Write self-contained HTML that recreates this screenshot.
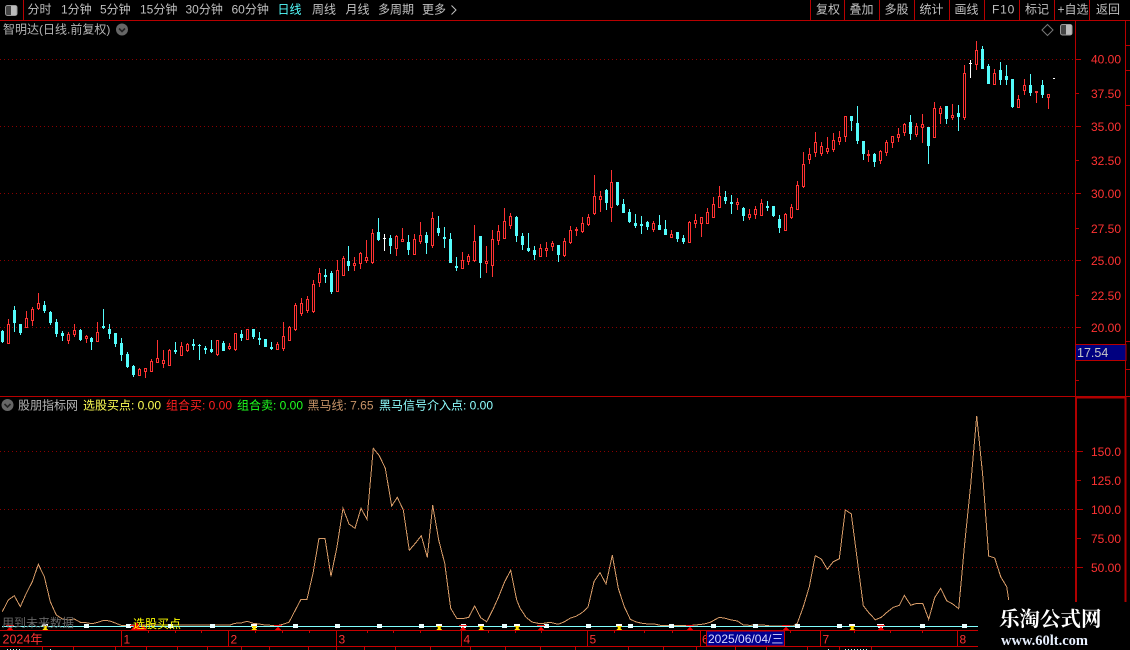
<!DOCTYPE html>
<html lang="zh"><head><meta charset="utf-8"><title>K线</title>
<style>
html,body{margin:0;padding:0;background:#000;width:1130px;height:650px;overflow:hidden}
svg{display:block;position:absolute;left:0;top:0}
text{font-family:"Liberation Sans","WenQuanYi Zen Hei","Noto Sans CJK SC",sans-serif;font-size:12px;white-space:pre}
.m{fill:#c0c0c0}
.l{fill:#ff3232;font-size:12.5px}
</style></head><body>
<svg id="s" width="1130" height="650" viewBox="0 0 1130 650" xmlns="http://www.w3.org/2000/svg" shape-rendering="crispEdges">
<defs><pattern id="dot" x="0" y="0" width="4" height="1" patternUnits="userSpaceOnUse"><rect width="1" height="1" fill="#8a0000"/></pattern></defs>
<rect width="1130" height="650" fill="#000"/>
<g fill="url(#dot)">
<rect x="0" y="59" width="1075" height="1"/><rect x="0" y="126" width="1075" height="1"/><rect x="0" y="193" width="1075" height="1"/><rect x="0" y="260" width="1075" height="1"/><rect x="0" y="327" width="1075" height="1"/><rect x="0" y="451" width="1075" height="1"/><rect x="0" y="509" width="1075" height="1"/><rect x="0" y="567" width="1075" height="1"/>
</g>
<g id="c"></g>
<g fill="none" stroke="#b80000" stroke-width="1">
<path d="M0 20.5H1130M0 396.5H1130M23.5 0V20M810.5 0V20M844.5 0V20M879.5 0V20M914.5 0V20M949.5 0V20M984.5 0V20M1019.5 0V20M1054.5 0V20M1089.5 0V20"/>
<path d="M1075.5 20V396M1125.5 20V396"/>
<path d="M1075 59.5H1081M1075 93.5H1079M1075 126.5H1081M1075 160.5H1079M1075 193.5H1081M1075 228.5H1079M1075 260.5H1081M1075 295.5H1079M1075 327.5H1081M1075 380.5H1079"/>
<path d="M1126 45.5H1130M1126 70.5H1130M1126 105.5H1130M1126 341.5H1130M1126 369.5H1130"/>
</g>
<g fill="none" stroke="#b00000">
<path d="M1076 397V602M1125.5 397V602M1075 397.5H1126" stroke-width="2"/>
<path d="M1077 451.5H1083M1077 480.5H1081M1077 509.5H1083M1077 538.5H1081M1077 567.5H1083"/>
</g>
<!-- menu -->
<g class="m">
<text x="27.5" y="13.5">分时</text><text x="61" y="13.5">1分钟</text><text x="100" y="13.5">5分钟</text><text x="140" y="13.5">15分钟</text><text x="185.5" y="13.5">30分钟</text><text x="231.5" y="13.5">60分钟</text>
<text x="277.5" y="13.5" style="fill:#54ffff">日线</text><text x="312" y="13.5">周线</text><text x="345.5" y="13.5">月线</text><text x="378" y="13.5">多周期</text><text x="422" y="13.5">更多</text>
<text x="816" y="13.5">复权</text><text x="849.5" y="13.5">叠加</text><text x="884.5" y="13.5">多股</text><text x="919.5" y="13.5">统计</text><text x="954.5" y="13.5">画线</text><text x="992" y="13.5" style="letter-spacing:.8px">F10</text><text x="1025" y="13.5">标记</text><text x="1057.5" y="13.5">+自选</text><text x="1096" y="13.5">返回</text>
<text x="3" y="33.5" style="fill:#b4b4b4">智明达(日线.前复权)</text>
</g>
<path d="M451.5 5.5L456 10L451.5 14.5" fill="none" stroke="#c0c0c0" shape-rendering="auto"/>
<!-- icons -->
<g shape-rendering="auto">
<rect x="5.5" y="5.5" width="11.5" height="10" rx="2" fill="#444" stroke="#999"/><rect x="11" y="6" width="5.5" height="9" fill="#bbb"/>
<rect x="1060.5" y="24.5" width="11.5" height="10.5" rx="2" fill="#444" stroke="#999"/><rect x="1066" y="25" width="5.5" height="9.5" fill="#bbb"/>
<path d="M1047.5 24.5L1053 30L1047.5 35.5L1042 30Z" fill="none" stroke="#777"/>
<circle cx="122" cy="29.5" r="6" fill="#666"/><path d="M119 28.5L122 31.5L125 28.5" fill="none" stroke="#222" stroke-width="1.6"/>
<circle cx="7.5" cy="405" r="6" fill="#666"/><path d="M4.5 404L7.5 407L10.5 404" fill="none" stroke="#222" stroke-width="1.6"/>
</g>
<!-- legend -->
<text x="18" y="409.5" fill="#b4b4b4">股朋指标网</text>
<text x="83" y="409.5" fill="#ffff54">选股买点: 0.00</text>
<text x="166" y="409.5" fill="#ff2020">组合买: 0.00</text>
<text x="237" y="409.5" fill="#20ff20">组合卖: 0.00</text>
<text x="307.5" y="409.5" fill="#c89468">黑马线: 7.65</text>
<text x="379" y="409.5" fill="#90ffff">黑马信号介入点: 0.00</text>
<!-- axis labels -->
<g class="l">
<text x="1091" y="63.5">40.00</text><text x="1091" y="98">37.50</text><text x="1091" y="131">35.00</text><text x="1091" y="165">32.50</text><text x="1091" y="198">30.00</text><text x="1091" y="233">27.50</text><text x="1091" y="265">25.00</text><text x="1091" y="300">22.50</text><text x="1091" y="332">20.00</text>
<text x="1091" y="456">150.0</text><text x="1091" y="485">125.0</text><text x="1091" y="514">100.0</text><text x="1091" y="543">75.00</text><text x="1091" y="572">50.00</text>
</g>
<rect x="1075.5" y="344.5" width="50.5" height="16" fill="#000080" stroke="#b80000"/>
<text x="1077" y="357" fill="#c8c8c8" style="font-size:12.5px">17.54</text>
<!-- line -->
<polyline id="pl" fill="none" stroke="#d89c68" stroke-width="1" points="2.3,611.7 8.3,600 14.3,595.7 20.3,606.7 26.3,593.3 32.3,581.7 38.3,564.3 44.3,576.7 50.3,601.7 56.3,615 62.3,619 68.3,620 74.3,619 80.3,622.3 86.3,622.7 92,623.7 98,622.3 104,620.3 110,621 116,623.3 122,625.7 128,625 134,625 230,625 235,623.3 241,623 247,621.3 253,623.3 259,624 265,625 271,625.3 277,625.7 283,624.3 289,622.3 295,610.7 301,599.3 307,599.3 313,573.3 319,538.3 325,538.3 331,576.3 337,546.7 343,508.3 349,524 355,528.3 361,508.3 367,519.3 373.3,448.3 379.3,455.7 385.3,468.3 391.7,506 397.3,497.3 403.3,510 409.3,550.3 415.3,543.3 421.3,535.7 427.3,557.3 432.7,505.3 438.7,540 444.7,563.3 450.7,608.3 456.7,618.3 462.7,618.7 468.7,617.3 474.7,606 480.7,617.7 486.7,621.7 492.7,610 498.7,596.7 504.7,581.7 510.7,570.3 516.7,600 520,608 526,617.3 532,622 538,623.3 544,623.3 550,622.3 558,624.3 564,622 570,618.3 576,616.3 582,612.7 588,607.3 594,581.7 600,572.7 606,584 612.3,555.3 618.3,588.3 624.3,606.7 630.3,619.3 636.3,622 642.3,623.3 648.3,624 654.3,624 660.3,625.3 666.3,625.7 686.3,625.7 692.3,625.3 698.3,624.7 704.3,624 710.3,622.3 719.3,617.3 725.3,618.3 731.3,620 737.3,621 743.3,625 749.3,625.3 763.3,625 770.7,626 793.3,626 797.3,623.3 803.3,606.7 809.3,586.7 815.3,555.7 821.3,559 827.3,569.3 833.3,561.7 839.3,558.7 845.3,510 851.3,514 857.3,560 863.3,605.7 869.3,613.3 875.3,619.7 881.3,617.3 887.3,612 893.3,607.3 899.3,605.3 904.3,595.3 910.7,605.3 916.7,603.3 922.7,603.3 928.7,619.3 934.7,597.7 940.7,588.3 946.7,600.7 952.7,604 958.7,608.7 964.7,543.3 970.7,485 976.7,416 982.7,475 988.7,556 994.7,558 1000.7,576.7 1006.7,586.7 1008.7,600"/>
<path d="M2 626.5H978" stroke="#80ffff" fill="none"/>
<g id="mk"></g>
<text x="2" y="627" fill="#666">用到未来数据</text>
<path d="M131 630L137 622L141 630Z M140 630L143 625L147 630Z" fill="#f00000" shape-rendering="auto"/>
<text x="133" y="628" fill="#ffff00">选股买点</text>
<!-- date axis -->
<g fill="none" stroke="#c80000">
<path d="M0 630.5H978M0 646.5H978"/>
<path d="M121.5 630V646M228.5 630V646M336.5 630V646M461.5 630V646M587.5 630V646M700.5 630V646M820.5 630V646M957.5 630V646"/>
<path d="M148.5 630V633M175.5 630V633M201.5 630V633M255.5 630V633M282.5 630V633M309.5 630V633M367.5 630V633M393.5 630V633M420.5 630V633M488.5 630V633M515.5 630V633M541.5 630V633M614.5 630V633M644.5 630V633M672.5 630V633M790.5 630V633M854.5 630V633M890.5 630V633M922.5 630V633"/>
<path d="M42.5 646V650M73.5 646V650M115.5 646V650M146.5 646V650M177.5 646V650M207.5 646V650M241.5 646V650M269.5 646V650M308.5 646V650M336.5 646V650M364.5 646V650M395.5 646V650M430.5 646V650M470.5 646V650M505.5 646V650M540.5 646V650M575.5 646V650M628.5 646V650M663.5 646V650M696.5 646V650M735.5 646V650M766.5 646V650M807.5 646V650M839.5 646V650M871.5 646V650"/>
</g>
<g fill="#ff3232">
<text x="2.5" y="643.5" style="font-size:12.5px">2024年</text><text x="123.5" y="643.5">1</text><text x="230.5" y="643.5">2</text><text x="338.5" y="643.5">3</text><text x="463.5" y="643.5">4</text><text x="589.5" y="643.5">5</text><text x="702" y="643.5">6</text><text x="822.5" y="643.5">7</text><text x="959.5" y="643.5">8</text>
</g>
<rect x="706.5" y="631" width="78" height="15" fill="#000090" stroke="#c80000"/>
<text x="708" y="643" fill="#d8d8ff">2025/06/04/三</text>
<path d="M7 649.5H22M50 649.5H52M828 649.5H830M845 649.5H867" stroke="#c0ffff" fill="none" stroke-dasharray="1 2"/>
<!-- watermark -->
<rect x="978" y="602" width="152" height="48" fill="#000"/>
<text x="999" y="626" style="font-family:'Noto Serif CJK SC','Liberation Serif',serif;font-size:20.5px;font-weight:700" fill="#fff" shape-rendering="auto">乐淘公式网</text>
<text x="1001" y="645" style="font-family:'Liberation Serif',serif;font-size:14.5px;font-weight:700" fill="#e8f0ff">www.60lt.com</text>
</svg>
<script>
var D=[
['c',331,341,330,342],['r',324,343,319,343],['c',310,322,306,331],['c',324,332,324,334],['r',318,327,311,327],['r',309,320,307,325],['r',303,308,293,309],['c',305,310,301,312],['c',312,322,311,324],['c',322,333,319,336],
['c',333,335,331,340],['r',334,340,332,343],['r',330,334,324,336],['c',330,339,329,340],['r',336,338,335,342],['c',338,341,337,349],['r',332,341,322,341],['c',326,327,309,328],['c',329,333,324,338],['c',333,343,333,346],
['c',343,354,338,360],['c',354,366,352,367],['c',366,374,365,376],['r',369,375,368,375],['r',368,371,368,377],['r',361,371,359,371],['r',358,362,340,362],['r',360,363,350,367],['r',350,365,349,365],['c',350,351,342,353],
['r',346,355,342,355],['r',344,350,343,351],['c',344,345,339,349],['c',345,345,344,359],['c',348,349,346,353],['c',349,351,340,352],['r',340,354,340,355],['c',343,350,341,350],['r',346,348,343,349],['r',333,349,333,350],
['c',334,337,330,340],['r',329,339,329,339],['c',329,336,329,338],['c',338,339,332,344],['c',339,346,339,346],['c',347,348,342,349],['r',344,349,342,349],['r',336,348,322,350],['r',327,340,326,340],['r',305,329,303,330],
['r',303,313,298,315],['r',299,310,296,312],['r',284,311,280,312],['r',273,282,268,286],['c',275,276,269,282],['c',273,291,271,293],['r',270,291,260,291],['r',258,275,256,275],['c',261,265,246,270],['r',263,265,257,270],
['r',253,263,252,268],['r',257,260,240,262],['r',233,262,229,263],['c',232,239,218,240],['w',238,238,234,250],['c',238,245,235,253],['r',236,248,235,255],['r',239,241,228,241],['c',242,249,235,254],['r',239,254,234,254],
['r',235,241,222,243],['c',235,242,232,253],['r',218,245,212,247],['c',228,232,216,235],['c',237,238,227,247],['c',239,262,233,262],['c',266,267,257,270],['r',260,268,252,268],['r',256,261,254,264],['r',241,260,225,261],
['c',236,262,236,277],['r',261,263,246,272],['r',239,265,230,276],['r',231,240,225,244],['r',221,238,208,238],['r',216,225,213,228],['c',217,235,216,241],['c',236,244,233,249],['c',248,250,233,251],['c',250,254,246,259],
['r',248,256,244,256],['r',248,250,242,256],['r',243,246,241,250],['c',245,254,245,261],['r',241,255,238,256],['r',230,242,226,243],['r',229,230,227,235],['r',223,231,217,232],['r',217,224,214,225],['r',196,213,175,214],
['r',196,199,191,211],['c',190,202,189,209],['r',182,207,170,221],['c',182,204,182,205],['c',204,212,199,212],['c',212,221,209,222],['c',223,225,214,227],['c',224,225,216,233],['c',222,226,221,229],['r',223,229,221,231],
['c',225,229,215,229],['c',229,234,220,234],['r',234,237,230,237],['c',232,238,232,241],['c',238,241,235,243],['r',222,242,221,242],['r',220,223,214,227],['r',217,223,217,236],['r',212,223,208,223],['r',204,217,197,217],
['r',196,207,186,207],['c',197,200,191,203],['c',202,203,195,213],['r',202,204,198,209],['c',208,215,207,220],['r',214,217,209,219],['r',209,214,206,218],['r',203,215,199,215],['c',206,207,201,210],['c',206,215,206,216],
['c',219,227,215,232],['r',214,230,213,230],['r',207,217,204,218],['r',185,209,181,209],['r',164,186,152,187],['r',154,159,148,163],['r',142,152,132,156],['r',146,153,142,155],['r',148,151,137,153],['r',140,149,133,151],
['r',137,141,131,144],['r',116,136,116,141],['c',116,120,116,130],['c',123,140,106,143],['c',141,153,141,159],['r',154,155,150,161],['c',154,161,153,166],['r',151,160,150,163],['r',142,152,140,155],['r',136,142,136,147],
['r',134,137,128,141],['r',124,132,123,135],['c',122,133,115,139],['r',126,134,123,136],['r',124,127,114,142],['c',127,145,127,163],['r',108,137,102,137],['r',108,113,106,123],['c',106,118,106,123],['r',115,117,104,119],
['c',113,116,105,130],['r',73,117,65,119],['w',63,63,60,77],['r',50,64,41,69],['c',49,68,46,68],['c',66,83,64,83],['r',73,84,69,84],['c',70,79,62,84],['c',76,79,65,84],['c',79,106,79,107],
['r',99,107,95,107],['r',85,90,79,94],['c',85,92,74,95],['r',91,92,91,102],['c',85,94,80,97],['r',94,97,94,108]
];
var h='',R='#ff3232',C='#54fcfc';
function rc(x,y,w,ht,f){return '<rect x="'+x+'" y="'+y+'" width="'+w+'" height="'+ht+'" fill="'+f+'"/>';}
D.forEach(function(d,i){
 var x=Math.floor(2.33+5.977*i),k=d[0],t=d[1],b=d[2],hi=d[3],lo=d[4];
 var col=k=='r'?R:(k=='c'?C:'#fff');
 h+=rc(x,hi,1,lo-hi+1,col);
 h+=rc(x-1,t,3,b-t+1,col);
 if(k=='r'&&b-t>=2)h+=rc(x,t+1,1,b-t-1,'#000');
});
h+=rc(1053,78,2,1,'#fff');
document.getElementById('c').innerHTML=h;
var m='';
[86,128,170,212,254,295,337,379,421,463,504,546,588,630,671,713,755,797,839,880,922,964].forEach(function(x){m+=rc(x-2,624,5,4,'#eaffff');});
[10,134,278,463,541,690,786,881].forEach(function(x){
 m+=rc(x-4,625,8,1,'#f01010');
 m+='<path d="M'+(x-3)+' 630L'+x+' 626.5L'+(x+3)+' 630Z" fill="#f00000"/>';
});
[45,254,439,481,517,619,852].forEach(function(x){
 m+=rc(x-3,624,6,2,'#ffffff');
 m+='<path d="M'+(x-3)+' 626H'+(x+3)+'L'+(x+1)+' 628L'+(x+3)+' 630H'+(x-3)+'L'+(x-1)+' 628Z" fill="#ffe000"/>';
});
m+=rc(877,624,7,1,'#ffffff');
document.getElementById('mk').innerHTML=m;
</script>
</body></html>
